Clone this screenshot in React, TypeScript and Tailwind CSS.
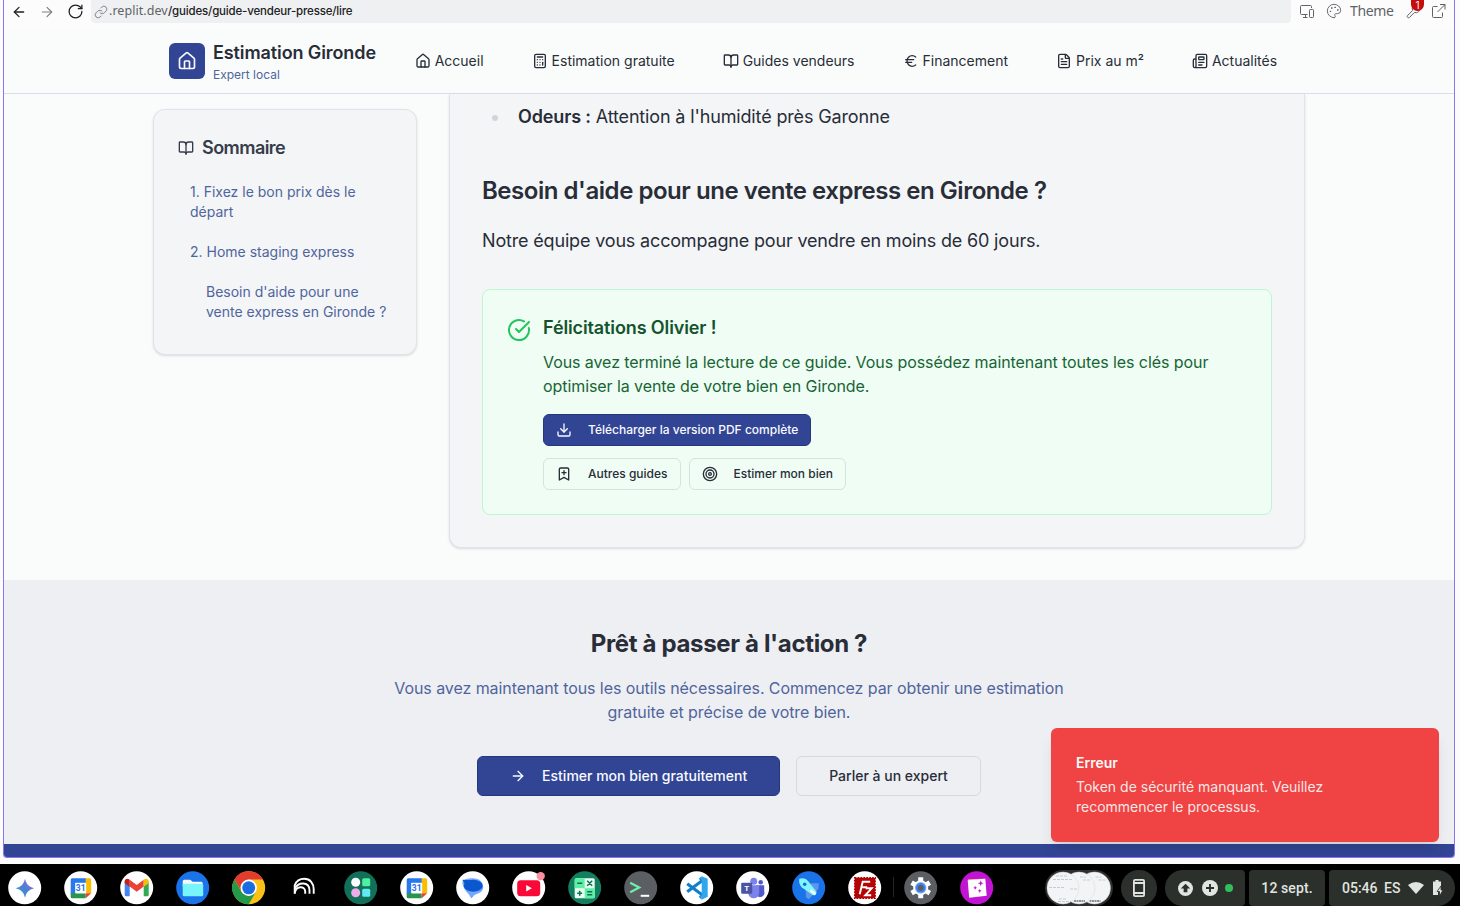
import React from "react";
import {
  ArrowLeft,
  ArrowRight,
  BookOpen,
  BookmarkPlus,
  Calculator,
  CircleCheckBig,
  Download,
  Euro,
  FileText,
  House,
  Link,
  Newspaper,
  Palette,
  RotateCw,
  Target,
  Wrench,
} from "lucide-react";

const navItems = [
  { label: "Accueil", Icon: House },
  { label: "Estimation gratuite", Icon: Calculator },
  { label: "Guides vendeurs", Icon: BookOpen },
  { label: "Financement", Icon: Euro },
  { label: "Prix au m²", Icon: FileText },
  { label: "Actualités", Icon: Newspaper },
];

function BrowserBar() {
  return (
    <div className="flex h-[29px] shrink-0 items-start bg-[#fcfcfc] text-[#5f6368]">
      <div className="flex h-[23px] w-[87px] shrink-0 items-center pl-[7px]">
        <ArrowLeft className="size-[16px] text-[#202124]" strokeWidth={1.9} />
        <ArrowRight className="ml-[12px] size-[16px] text-[#7b7e84]" strokeWidth={1.7} />
        <RotateCw className="ml-[12px] size-[17px] text-[#202124]" strokeWidth={1.8} />
      </div>
      <div className="flex h-[23px] w-[1200px] shrink-0 items-center rounded-b-[4px] bg-[#eff0f2] pl-[3px] text-[12px] leading-none">
        <Link className="size-[14px] text-[#7b7e84]" strokeWidth={1.6} />
        <span className="ml-px w-[59px] font-['Noto_Sans',sans-serif] text-[12.5px] tracking-[0.05px] whitespace-nowrap">.replit.dev</span>
        <span className="font-['Inter',sans-serif] text-[11.5px] font-medium tracking-[-0.17px] text-[#202124]">/guides/guide-vendeur-presse/lire</span>
      </div>
      <div className="flex h-[23px] items-center pl-[8px]">
        <svg viewBox="0 0 16 16" className="-mt-px size-[16px]" fill="none" stroke="currentColor" strokeWidth="1">
          <path d="M8.500 11.500H2.500a1 1 0 0 1-1-1v-7a1 1 0 0 1 1-1h9a1 1 0 0 1 1 1V5M6.500 11.500v2.500M4 14.500h4.500" />
          <rect x="10.500" y="6.500" width="4" height="8" rx=".8" />
        </svg>
        <Palette className="-mt-px ml-[11px] size-[16px]" strokeWidth={1.4} />
        <span className="-mt-[2px] ml-[8px] w-[45px] font-['Noto_Sans',sans-serif] text-[14px] leading-none tracking-[-0.35px]">Theme</span>
        <span className="relative ml-[11px]">
          <Wrench className="size-[15px]" strokeWidth={1.6} />
          <span className="absolute -top-[4px] left-[5px] flex h-[11px] w-[13px] items-center justify-center rounded-t-[4px] rounded-b-full bg-[#c50d0d] pb-[2px] font-['Inter',sans-serif] text-[10px] leading-[10px] text-white">1</span>
        </span>
        <svg viewBox="0 0 14 14" className="-mt-px ml-[11px] size-[14px]" fill="none" stroke="currentColor" strokeWidth="1">
          <path d="M5.500 2.500h-4a1 1 0 0 0-1 1v9a1 1 0 0 0 1 1h8a1 1 0 0 0 1-1v-4M8 .5h5v5M13 .5L5.500 8" />
        </svg>
      </div>
    </div>
  );
}

function SiteHeader() {
  return (
    <header className="flex h-[65px] shrink-0 items-center border-b border-[#dcdfea] pl-[165px]">
      <div className="flex w-[245.7px] shrink-0 items-center gap-2">
        <div className="flex size-9 items-center justify-center rounded-[6px] bg-[#324594]">
          <House className="size-5 text-[#f8faff]" />
        </div>
        <div className="pt-[2px] whitespace-nowrap">
          <div className="text-[18px] leading-[22px] font-semibold tracking-[-0.1px]">Estimation Gironde</div>
          <div className="mt-[3px] text-[12px] leading-4 text-[#50659c]">Expert local</div>
        </div>
      </div>
      <nav className="flex gap-12">
        {navItems.map(({ label, Icon }) => (
          <a key={label} className="flex items-center gap-1 text-[14px] leading-5 whitespace-nowrap">
            <Icon className="size-4" />
            {label}
          </a>
        ))}
      </nav>
    </header>
  );
}

function Sommaire() {
  return (
    <aside className="mt-[15px] h-[246px] w-[264px] shrink-0 rounded-xl border border-[#e1e3ec] bg-[#f4f5f7] px-6 pt-6 shadow-sm">
      <h3 className="flex h-7 items-center gap-2 text-[18px] font-semibold tracking-[-0.55px] text-[#363c4a]">
        <BookOpen className="size-4" />
        <span className="-mt-[2px]">Sommaire</span>
      </h3>
      <nav className="mt-5 flex flex-col gap-5 pl-3 text-[14px] leading-5 text-[#50659c]">
        <a>1. Fixez le bon prix dès le<br />départ</a>
        <a>2. Home staging express</a>
        <a className="pl-4 whitespace-nowrap">Besoin d'aide pour une<br />vente express en Gironde ?</a>
      </nav>
    </aside>
  );
}

function OutlineButton({ Icon, label }: { Icon: typeof Target; label: string }) {
  return (
    <button className="flex h-8 items-center gap-4 rounded-md border border-[#d6e2dc] px-3 text-[12px] font-medium whitespace-nowrap">
      <Icon className="size-4" />
      {label}
    </button>
  );
}

function Article() {
  return (
    <article className="h-[454px] w-[856px] shrink-0 rounded-b-xl border border-t-0 border-[#e1e3ec] bg-[#f4f5f7] px-8 shadow-sm">
      <div className="flex h-[29px] items-center pt-[15px] pl-[10px] text-[18px] tracking-[-0.15px]">
        <span className="mt-[3px] mr-[20px] size-[6px] rounded-full bg-[#d1d5db]" />
        <span><strong className="font-semibold">Odeurs :</strong> Attention à l'humidité près Garonne</span>
      </div>
      <h2 className="mt-[52px] text-[24px] leading-8 font-semibold tracking-[-0.46px]">Besoin d'aide pour une vente express en Gironde ?</h2>
      <p className="mt-[18px] text-[18px] leading-8 tracking-[-0.17px]">Notre équipe vous accompagne pour vendre en moins de 60 jours.</p>
      <section className="mt-8 flex h-[226px] rounded-lg border border-[#bbf7d0] bg-[#f0fdf4] px-6 pt-6">
        <CircleCheckBig className="mt-1 size-6 shrink-0 text-[#22c55e]" />
        <div className="ml-3">
          <h4 className="text-[18px] leading-7 font-semibold tracking-[-0.12px] text-[#14532d]">Félicitations Olivier !</h4>
          <p className="mt-2 text-[16px] leading-6 tracking-[-0.078px] whitespace-nowrap text-[#166534]">
            Vous avez terminé la lecture de ce guide. Vous possédez maintenant toutes les clés pour<br />
            optimiser la vente de votre bien en Gironde.
          </p>
          <button className="mt-4 flex h-8 items-center gap-4 rounded-md border border-[#27377e] bg-[#324594] px-3 text-[12px] font-medium whitespace-nowrap text-[#f8faff]">
            <Download className="size-4" />
            Télécharger la version PDF complète
          </button>
          <div className="mt-3 flex gap-2">
            <OutlineButton Icon={BookmarkPlus} label="Autres guides" />
            <OutlineButton Icon={Target} label="Estimer mon bien" />
          </div>
        </div>
      </section>
    </article>
  );
}

function CallToAction() {
  return (
    <section className="flex h-[264px] shrink-0 flex-col items-center bg-[#eeeff3] pt-12">
      <h2 className="text-[24px] leading-8 font-bold tracking-[-0.35px]">Prêt à passer à l'action ?</h2>
      <p className="mt-4 text-center text-[16px] leading-6 tracking-[-0.075px] text-[#50659c]">
        Vous avez maintenant tous les outils nécessaires. Commencez par obtenir une estimation<br />
        gratuite et précise de votre bien.
      </p>
      <div className="mt-8 flex gap-4 text-[14px] font-medium">
        <button className="flex h-10 items-center gap-4 rounded-md border border-[#27377e] bg-[#324594] px-8 text-[#f8faff]">
          <ArrowRight className="size-4" />
          <span className="-mt-[2px]">Estimer mon bien gratuitement</span>
        </button>
        <button className="h-10 rounded-md border border-[#d7d9df] px-8 pb-[2px]">Parler à un expert</button>
      </div>
    </section>
  );
}

function CalendarIcon() {
  return (
    <>
      <circle cx="16.5" cy="16.5" r="16.5" fill="#fff" />
      <path d="M6.500 8.500A1.500 1.500 0 0 1 8 7H22v5H12v11H6.500z" fill="#2878ed" />
      <path d="M21.500 7h4A1.500 1.500 0 0 1 27 8.500V22h-5.500z" fill="#fbbc04" />
      <path d="M6.500 22h15v5H8A1.500 1.500 0 0 1 6.500 25.500z" fill="#26964a" />
      <path d="M21.500 22H27l-5.500 5z" fill="#ea4335" />
      <rect x="11" y="11.500" width="11" height="10.500" fill="#fff" />
      <text x="16.500" y="19.800" textAnchor="middle" fontSize="8.500" fontWeight="700" fill="#1a73e8" fontFamily="Roboto, sans-serif">31</text>
    </>
  );
}

const shelfApps: { name: string; art: React.ReactNode }[] = [
  {
    name: "gemini",
    art: (
      <>
        <defs>
          <linearGradient id="spark" x1="0" y1="1" x2="1" y2="0">
            <stop offset="0" stopColor="#20a8bd" />
            <stop offset=".5" stopColor="#4f7fd6" />
            <stop offset="1" stopColor="#a06ad0" />
          </linearGradient>
        </defs>
        <circle cx="16.5" cy="16.5" r="16.5" fill="#fff" />
        <path d="M16.800 7.500Q18.200 15.500 26 17Q18.200 18.500 16.800 26.500Q15.400 18.500 7.500 17Q15.400 15.500 16.800 7.500Z" fill="url(#spark)" />
      </>
    ),
  },
  { name: "calendar", art: <CalendarIcon /> },
  {
    name: "gmail",
    art: (
      <>
        <circle cx="16.5" cy="16.5" r="16.5" fill="#fff" />
        <path d="M4.500 10.500l5 3.700V25H6a1.500 1.500 0 0 1-1.500-1.500z" fill="#4285f4" />
        <path d="M28.500 10.500l-5 3.700V25H27a1.500 1.500 0 0 0 1.500-1.500z" fill="#34a853" />
        <path d="M9.500 8.500l7 5.300 7-5.300v6.700l-7 5.300-7-5.300z" fill="#ea4335" />
        <path d="M23.500 8.500c2-2 5-1 5 1.500v2l-5 3.500z" fill="#fbbc04" />
        <path d="M9.500 8.500c-2-2-5-1-5 1.500v2l5 3.500z" fill="#c5221f" />
      </>
    ),
  },
  {
    name: "files",
    art: (
      <>
        <circle cx="16.5" cy="16.5" r="16.5" fill="#1a73e8" />
        <path d="M6.500 10A1.500 1.500 0 0 1 8 8.500h6l2.500 2H25A1.500 1.500 0 0 1 26.500 12v3h-20z" fill="#f3f8ff" />
        <rect x="6.500" y="12.500" width="20.500" height="12.500" rx="1.500" fill="#78f5fa" />
      </>
    ),
  },
  {
    name: "chrome",
    art: (
      <>
        <circle cx="16.5" cy="16.5" r="16.5" fill="#fbc116" />
        <path d="M16.500 16.500L9.500 20.500 2.200 8.250A16.500 16.500 0 0 1 30.800 8.250H16.500z" fill="#e33b2e" />
        <path d="M2.200 8.250L9.360 20.600 16.500 24.700 16.500 33A16.500 16.500 0 0 1 2.200 8.250z" fill="#229a49" />
        <path d="M16.500 33l7.100-12.400-7.100 4.100-5-1z" fill="#229a49" />
        <circle cx="16.5" cy="16.5" r="8.200" fill="#fff" />
        <circle cx="16.5" cy="16.5" r="6.500" fill="#1a6de0" />
      </>
    ),
  },
  {
    name: "arcs",
    art: (
      <g fill="none" stroke="#fff" strokeWidth="1.900">
        <path d="M6.500 22.500V14C8.500 9 12 7.500 16 7.500C22 7.500 25.500 12 25.500 18v4.500" />
        <path d="M6.500 17.500C10 10.500 21 10 21.300 19v3.500" />
        <path d="M6.500 22C7.500 14.500 16.500 14 17 20v2.500" />
      </g>
    ),
  },
  {
    name: "launcher",
    art: (
      <>
        <circle cx="16.5" cy="16.5" r="16.5" fill="#137058" />
        <circle cx="11.500" cy="11" r="4.500" fill="#fff" />
        <rect x="18" y="7" width="8" height="8" rx="1.500" fill="#4df0a0" />
        <circle cx="11.500" cy="21.500" r="4.500" fill="#efaced" />
        <rect x="18" y="17.500" width="8" height="8" rx="1.500" fill="#62eaf2" />
      </>
    ),
  },
  { name: "calendar-2", art: <CalendarIcon /> },
  {
    name: "messages",
    art: (
      <>
        <circle cx="16.5" cy="16.5" r="16.5" fill="#fff" />
        <path d="M6 11.500C7 8 11 7 16 7c8 0 11 4 11 9 0 5-5 6-9 8l-2.500 3c-1 0-2-3-3-4C9 20 7 16 6 11.500z" fill="#77a7ff" />
        <ellipse cx="17" cy="14.500" rx="9.500" ry="6" fill="#0b57d0" />
        <path d="M6 8.500l10 .500-7 4z" fill="#0b57d0" />
      </>
    ),
  },
  {
    name: "youtube",
    art: (
      <>
        <circle cx="16.5" cy="16.5" r="16.5" fill="#fff" />
        <rect x="5" y="9" width="23" height="16" rx="3.500" fill="#fa0838" />
        <path d="M14 13.700v6.600l5.700-3.300z" fill="#fff" />
        <circle cx="28.500" cy="4.800" r="4.200" fill="#ff8fa0" />
      </>
    ),
  },
  {
    name: "calculator",
    art: (
      <>
        <circle cx="16.5" cy="16.5" r="16.5" fill="#12805f" />
        <rect x="6.500" y="7" width="20" height="20" rx="1.500" fill="#eafff1" />
        <path d="M6.500 8.500A1.500 1.500 0 0 1 8 7h8.500v10h-10zM16.500 17h10v8.500a1.500 1.500 0 0 1-1.500 1.500h-8.500z" fill="#5bf0a3" />
        <path d="M9 12h5M19 9.500l5 5M24 9.500l-5 5M9 22h5M11.500 19.500v5M19 20.500h5M19 23.500h5" stroke="#107355" strokeWidth="1.600" />
      </>
    ),
  },
  {
    name: "terminal",
    art: (
      <>
        <circle cx="16.5" cy="16.5" r="16.5" fill="#5b5e62" />
        <path d="M6 11.500l9 4.700-9 4.700" fill="none" stroke="#6cf0ae" strokeWidth="2.200" />
        <path d="M16.500 24.500H25" stroke="#fff" strokeWidth="2" />
      </>
    ),
  },
  {
    name: "vscode",
    art: (
      <>
        <circle cx="16.5" cy="16.5" r="16.5" fill="#fff" />
        <path d="M7 12.500L22.500 24M7 20.500L22.500 9" stroke="#147fc9" strokeWidth="3.200" />
        <path d="M21.500 5l6 2.500v18l-6 3z" fill="#30a7ec" />
        <path d="M21.500 5v23.500l-3-3 3-3v-12l-3-3z" fill="#1c91dc" />
      </>
    ),
  },
  {
    name: "teams",
    art: (
      <>
        <circle cx="16.5" cy="16.5" r="16.5" fill="#fff" />
        <circle cx="17.500" cy="10" r="3.500" fill="#7b83eb" />
        <circle cx="24.500" cy="11" r="2.300" fill="#5059c9" />
        <path d="M20 14h8v6a4 4 0 0 1-8 3z" fill="#5059c9" />
        <path d="M12 14h11v7.500a5.500 5.500 0 0 1-11 0z" fill="#7b83eb" />
        <rect x="5" y="11.500" width="11" height="11" rx="1" fill="#4b53a5" />
        <text x="10.500" y="20" textAnchor="middle" fontSize="8" fontWeight="700" fill="#fff" fontFamily="Roboto, sans-serif">T</text>
      </>
    ),
  },
  {
    name: "rocket",
    art: (
      <>
        <circle cx="16.5" cy="16.5" r="16.5" fill="#1a73e8" />
        <path d="M19 12l7.500 0-.300 5.500-9.500 10.500-3-2-.200-7z" fill="#6095ed" />
        <path d="M7 7.500c4-1.500 7 0 9 2.500l8 10c1 3-1 5-4 3.500L9.500 16C7.500 14 6.500 11 7 7.500z" fill="#80f6fc" />
        <path d="M19 18l5 4-1.500 2-5-4z" fill="#fff" />
        <circle cx="12.500" cy="13" r="1.800" fill="#176ad6" />
      </>
    ),
  },
  {
    name: "filezilla",
    art: (
      <>
        <circle cx="16.5" cy="16.5" r="16.5" fill="#fff" />
        <rect x="6.500" y="6.500" width="20.500" height="20.500" fill="#b30505" stroke="#b30505" strokeWidth="1.500" strokeDasharray="1.700 1.200" />
        <path d="M11.500 23l3-12.500H22M13.500 16h5.500M17.500 17h6L17 24h6" fill="none" stroke="#fff" strokeWidth="1.900" />
      </>
    ),
  },
  {
    name: "settings",
    art: (
      <>
        <circle cx="16.5" cy="16.5" r="16.5" fill="#5b5e62" />
        <circle cx="16.5" cy="16.5" r="7.500" fill="#fff" />
        <path d="M16.500 6v21M7.400 11.250l18.200 10.500M7.400 21.750l18.200-10.500" stroke="#fff" strokeWidth="5" />
        <circle cx="16.5" cy="16.5" r="5.800" fill="#8ab4f8" />
        <circle cx="16.5" cy="16.5" r="4.800" fill="#3b82ea" />
        <circle cx="16.5" cy="16.5" r="2.900" fill="#5b5e62" />
      </>
    ),
  },
  {
    name: "gallery",
    art: (
      <>
        <circle cx="16.5" cy="16.5" r="16.5" fill="#c115d3" />
        <path d="M8 8l17-.500.500 15L9 24z" fill="#ffac98" />
        <path d="M7.500 9l17.500-1.500 1.500 17L9 26.500z" fill="#fff" />
        <path d="M20.500 9l.8 2.200 2.200.8-2.200.8-.8 2.200-.8-2.200-2.200-.8 2.200-.8zM15 14.500l.600 1.400 1.400.600-1.400.600-.600 1.400-.600-1.400-1.400-.600 1.400-.600zM19.500 17.500l.600 1.400 1.400.600-1.400.600-.600 1.400-.600-1.400-1.400-.600 1.400-.600z" fill="#c115d3" />
      </>
    ),
  },
];

function WindowPreview() {
  return (
    <svg viewBox="0 0 68 36" className="h-[36px] w-[68px]">
      <rect width="68" height="36" rx="18" fill="#2b302d" />
      {[49.5, 34, 18].map((cx, i) => (
        <g key={cx}>
          <circle cx={cx} cy="18" r="16" fill="#f3f4f6" stroke="#d3d6d7" strokeWidth=".5" />
          <path
            d={i === 2 ? "M11 6h12M8 9.500h20M4 17.500h16M25 19h7M14 29h8M13 31.500h13" : `M${cx + 1} 7h6M${cx + 4} 10h7`}
            stroke="#b4b8c4"
            strokeWidth=".7"
            strokeDasharray="3 1"
          />
          {i < 2 && <path d={`M${cx - 5} 31h11`} stroke="#2c2f36" strokeWidth="1.200" strokeDasharray="2 .5" />}
        </g>
      ))}
    </svg>
  );
}

function Shelf() {
  return (
    <footer className="flex h-[42px] shrink-0 items-start bg-black pt-[6px] font-['Roboto',sans-serif] text-[14px] font-medium text-[#e0e5df]">
      <div className="flex w-[1045px] shrink-0 gap-[23px] pt-[1px] pl-[8px]">
        {shelfApps.map(({ name, art }) => (
          <div key={name} className="relative shrink-0">
            <svg viewBox="-.2 -.3 33 33" className="size-[33px] overflow-visible">{art}</svg>
            {name === "settings" && <span className="absolute top-[6px] -left-[11px] h-[20px] w-px bg-[#242424]" />}
          </div>
        ))}
      </div>
      <WindowPreview />
      <div className="ml-[8px] flex size-[36px] items-center justify-center rounded-full bg-[#2b302d]">
        <svg viewBox="0 0 14 20" className="h-[20px] w-[14px]" fill="none" stroke="currentColor" strokeWidth="1.800">
          <rect x="1.900" y="1.900" width="10.200" height="16.200" rx="1.200" />
          <path d="M2 5h10M2 15h10" />
        </svg>
      </div>
      <div className="ml-[8px] flex h-[36px] w-[80px] items-center rounded-l-[18px] rounded-r-[4px] bg-[#2b302d] pl-[13px]">
        <svg viewBox="0 0 16 16" className="size-[15px]">
          <circle cx="8" cy="8" r="8" fill="#e0e5df" />
          <path d="M8 3l5 5h-3v4H6V8H3z" fill="#2b302d" />
        </svg>
        <svg viewBox="0 0 16 16" className="ml-[9px] size-[16px]">
          <circle cx="8" cy="8" r="8" fill="#e0e5df" />
          <path d="M8 4v8M4 8h8" stroke="#2b302d" strokeWidth="1.900" />
        </svg>
        <span className="ml-[7px] size-[8px] rounded-full bg-[#34be5b]" />
      </div>
      <div className="ml-[4px] flex h-[36px] w-[76px] items-center justify-center rounded-[4px] bg-[#2b302d] tracking-[0.1px]">12 sept.</div>
      <div className="ml-[4px] flex h-[36px] w-[126px] items-center rounded-l-[4px] rounded-r-[18px] bg-[#2b302d] pl-[13px]">
        <span className="w-[42px]">05:46</span>
        <span className="w-[24px]">ES</span>
        <svg viewBox="0 0 16 12" className="h-[12px] w-[16px]">
          <path d="M0 3Q8-3 16 3L8 12z" fill="currentColor" />
        </svg>
        <svg viewBox="0 0 10 16" className="ml-[9px] h-[16px] w-[10px]">
          <path d="M2.500 0h3v1.500H8V7L5 11v4H0V1.500h2.500z" fill="currentColor" />
          <path d="M8 6l-4 5.500h2.500V16l3.500-6H8z" fill="currentColor" stroke="#2b302d" strokeWidth=".8" />
        </svg>
      </div>
    </footer>
  );
}

function Toast() {
  return (
    <div className="absolute top-[728px] left-[1051px] h-[114px] w-[388px] rounded-md bg-[#f04343] px-[25px] pt-[25px] text-[14px] leading-5 text-[#fafafa] shadow-lg">
      <div className="font-semibold">Erreur</div>
      <div className="mt-1 opacity-90">Token de sécurité manquant. Veuillez<br />recommencer le processus.</div>
    </div>
  );
}

export default function App() {
  return (
    <div className="relative flex h-[906px] w-[1460px] flex-col overflow-hidden bg-[#fcfcfc] font-['Inter',sans-serif] text-[#282d38]">
      <div className="mb-[6px] ml-[3px] flex h-[858px] w-[1452px] shrink-0 flex-col overflow-hidden rounded-b-[4px] border border-t-0 border-[#8b75f5] bg-[#fafcfb]">
        <BrowserBar />
        <SiteHeader />
        <main className="flex h-[486px] shrink-0 items-start gap-8 pl-[149px]">
          <Sommaire />
          <Article />
        </main>
        <CallToAction />
        <div className="h-[13px] shrink-0 bg-[#324594]" />
      </div>
      <Shelf />
      <Toast />
    </div>
  );
}
